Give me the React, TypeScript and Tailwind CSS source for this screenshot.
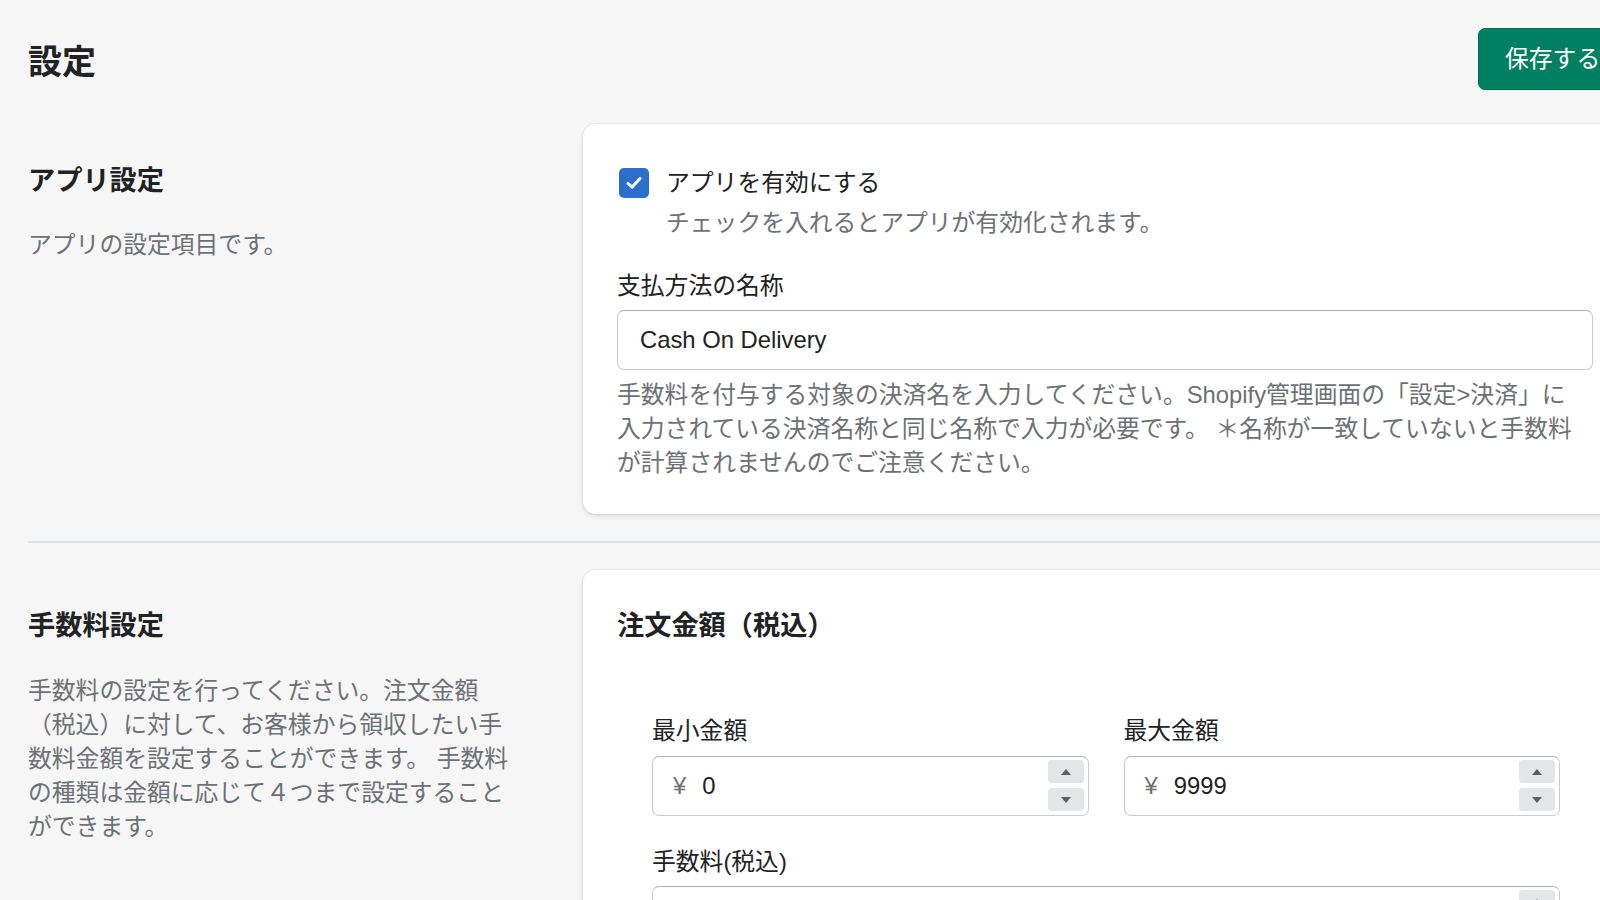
import React from "react";

const FONT = {
  fontFamily: '"Liberation Sans", "Noto Sans CJK JP", sans-serif',
};

function Spinner() {
  return (
    <div className="flex flex-col gap-[5px] pr-[4px]">
      <div className="flex h-[23px] w-[36px] items-center justify-center rounded-[4px] bg-[#e4e5e7]">
        <svg width="10" height="6" viewBox="0 0 10 6">
          <path d="M5 0 L10 6 L0 6 Z" fill="#5c5f62" />
        </svg>
      </div>
      <div className="flex h-[23px] w-[36px] items-center justify-center rounded-[4px] bg-[#e4e5e7]">
        <svg width="10" height="6" viewBox="0 0 10 6">
          <path d="M0 0 L10 0 L5 6 Z" fill="#5c5f62" />
        </svg>
      </div>
    </div>
  );
}

function MoneyField({ value }: { value?: string }) {
  return (
    <div className="flex h-[60px] items-center rounded-[7px] border-[1.5px] border-[#c9cccf] border-t-[#aeb4b9] bg-white">
      {value !== undefined ? (
        <>
          <span className="pl-[20px] text-[23.8px] text-[#6d7175]">¥</span>
          <span className="flex-1 pl-[16px] text-[23.8px] text-[#202223]">{value}</span>
        </>
      ) : (
        <span className="flex-1" />
      )}
      <Spinner />
    </div>
  );
}

export default function App() {
  return (
    <div
      className="h-[900px] w-full overflow-hidden bg-[#f6f6f7] text-[#202223]"
      style={FONT}
    >
      <div className="w-[1600px] pl-[28px]">
        <div className="w-[1601px]">
          {/* Header */}
          <header className="flex items-start pt-[28px]">
            <h1 className="mt-[10px] flex-1 text-[34px] font-bold leading-[48px]">
              設定
            </h1>
            <button className="flex h-[62px] w-[151px] items-center rounded-[7px] border-[1.5px] border-[#006e52] bg-[#008060] pl-[26px] text-[23.8px] text-white shadow-[0_1px_0_rgba(0,0,0,0.05)]">
              保存する
            </button>
          </header>

          {/* Section 1 */}
          <section className="mt-[34px] flex">
            <div className="w-[555px] shrink-0 pt-[36px]">
              <h2 className="text-[27.2px] font-bold leading-[41px]">アプリ設定</h2>
              <p className="mt-[27px] text-[23.8px] leading-[34px] text-[#6d7175]">
                アプリの設定項目です。
              </p>
            </div>
            <div className="w-[1046px] shrink-0 rounded-[13px] bg-white px-[34px] pb-[34px] pt-[42px] shadow-[0_0_0_1px_rgba(63,63,68,0.05),0_2px_4px_rgba(63,63,68,0.15)]">
              <div className="flex items-center">
                <div className="ml-[2px] flex h-[30px] w-[30px] items-center justify-center rounded-[5px] bg-[#2c6ecb]">
                  <svg width="20" height="20" viewBox="0 0 20 20">
                    <path
                      d="M4 10.5 L8 14.2 L16 5.5"
                      fill="none"
                      stroke="white"
                      strokeWidth="3"
                      strokeLinecap="round"
                      strokeLinejoin="round"
                    />
                  </svg>
                </div>
                <span className="ml-[17px] text-[23.8px] leading-[34px]">
                  アプリを有効にする
                </span>
              </div>
              <p className="mt-[6px] pl-[49px] text-[23.8px] leading-[34px] text-[#6d7175]">
                チェックを入れるとアプリが有効化されます。
              </p>

              <label className="mt-[29px] block text-[23.8px] leading-[34px]">
                支払方法の名称
              </label>
              <div className="mt-[7px] flex h-[60px] w-[976px] items-center rounded-[7px] border-[1.5px] border-[#c9cccf] border-t-[#aeb4b9] bg-white pl-[22px] text-[23.8px]">
                Cash On Delivery
              </div>
              <p className="mt-[8px] whitespace-nowrap text-[23.8px] leading-[34px] text-[#6d7175]">
                手数料を付与する対象の決済名を入力してください。Shopify管理画面の「設定&gt;決済」に
                <br />
                入力されている決済名称と同じ名称で入力が必要です。 ＊名称が一致していないと手数料
                <br />
                が計算されませんのでご注意ください。
              </p>
            </div>
          </section>

          <div className="mt-[27px] h-[1.7px] w-full bg-[#dfe3e8]" />

          {/* Section 2 */}
          <section className="mt-[27px] flex">
            <div className="w-[555px] shrink-0 pt-[35px]">
              <h2 className="text-[27.2px] font-bold leading-[41px]">手数料設定</h2>
              <p className="mt-[28px] whitespace-nowrap text-[23.8px] leading-[34px] text-[#6d7175]">
                手数料の設定を行ってください。注文金額
                <br />
                （税込）に対して、お客様から領収したい手
                <br />
                数料金額を設定することができます。 手数料
                <br />
                の種類は金額に応じて４つまで設定すること
                <br />
                ができます。
              </p>
            </div>
            <div className="w-[1046px] shrink-0 rounded-[13px] bg-white px-[34px] pb-[35px] pt-[35px] shadow-[0_0_0_1px_rgba(63,63,68,0.05),0_2px_4px_rgba(63,63,68,0.15)]">
              <h3 className="text-[27.2px] font-bold leading-[41px]">
                注文金額（税込）
              </h3>
              <div className="mt-[68px] w-[978px] px-[35px]">
                <div className="grid grid-cols-2 gap-[35px]">
                  <div>
                    <label className="block text-[23.8px] leading-[34px]">最小金額</label>
                    <div className="mt-[8px]">
                      <MoneyField value="0" />
                    </div>
                  </div>
                  <div>
                    <label className="block text-[23.8px] leading-[34px]">最大金額</label>
                    <div className="mt-[8px]">
                      <MoneyField value="9999" />
                    </div>
                  </div>
                </div>
                <label className="mt-[29px] block text-[23.8px] leading-[34px]">
                  手数料(税込)
                </label>
                <div className="mt-[7px]">
                  <MoneyField />
                </div>
              </div>
            </div>
          </section>
        </div>
      </div>
    </div>
  );
}
